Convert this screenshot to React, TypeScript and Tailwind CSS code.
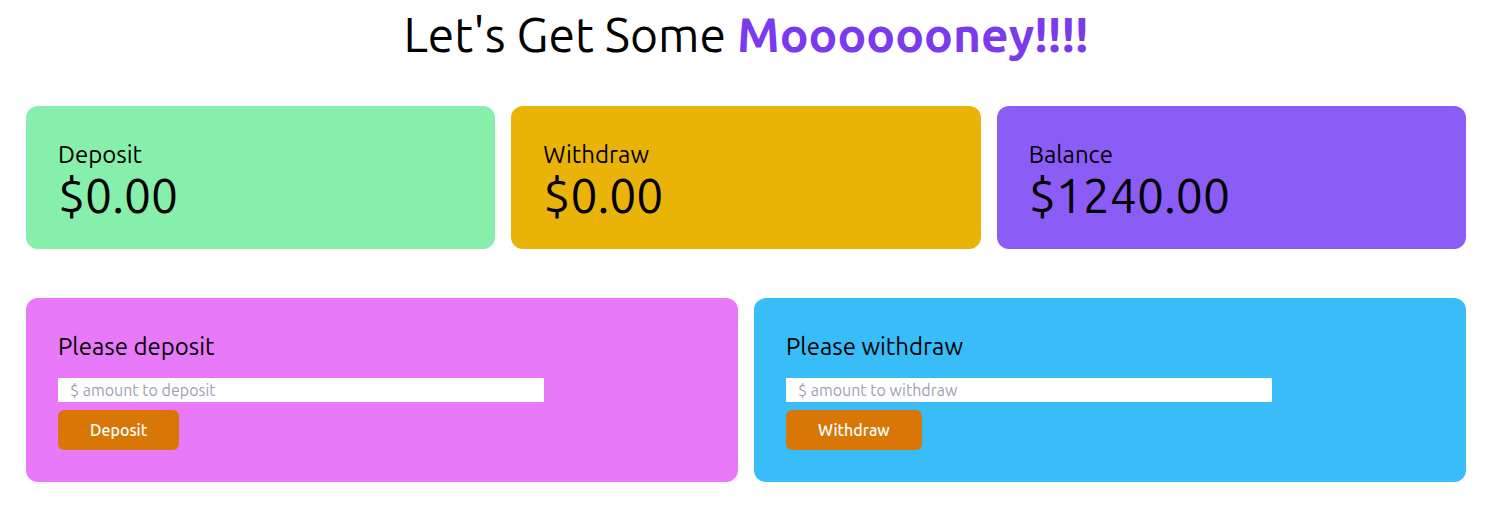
import React from "react";

export default function App() {
  const stats = [
    { label: "Deposit", value: "$0.00", bg: "bg-[#86efac]" },
    { label: "Withdraw", value: "$0.00", bg: "bg-[#eab308]" },
    { label: "Balance", value: "$1240.00", bg: "bg-[#8b5cf6]" },
  ];

  const forms = [
    { title: "Please deposit", placeholder: "$ amount to deposit", button: "Deposit", bg: "bg-[#e879f9]" },
    { title: "Please withdraw", placeholder: "$ amount to withdraw", button: "Withdraw", bg: "bg-[#38bdf8]" },
  ];

  return (
    <div className="min-h-screen bg-white pl-[26px] pr-[32px] pt-[10px] font-['Ubuntu','Lato',sans-serif] text-black">
      <h1 className="text-center text-5xl leading-[48px]">
        Let's Get Some <span className="font-semibold text-[#7c3aed]">Mooooooney!!!!</span>
      </h1>

      <div className="mt-12 grid grid-cols-3 gap-4">
        {stats.map((s) => (
          <div key={s.label} className={`${s.bg} h-[143px] rounded-xl px-8 pt-[33px]`}>
            <div className="text-2xl leading-8">{s.label}</div>
            <div className="text-5xl leading-[48px]">{s.value}</div>
          </div>
        ))}
      </div>

      <div className="mt-[49px] grid grid-cols-2 gap-4">
        {forms.map((f) => (
          <div key={f.title} className={`${f.bg} h-[184px] rounded-xl px-8 pt-[33px]`}>
            <div className="text-2xl leading-8">{f.title}</div>
            <input
              type="text"
              placeholder={f.placeholder}
              className="mt-[15px] block h-6 w-3/4 bg-white px-3 text-base text-black outline-none placeholder:text-[#9ca3af]"
            />
            <button className="mt-2 h-10 rounded-md bg-[#d97706] px-8 text-base font-medium text-white">
              {f.button}
            </button>
          </div>
        ))}
      </div>
    </div>
  );
}
